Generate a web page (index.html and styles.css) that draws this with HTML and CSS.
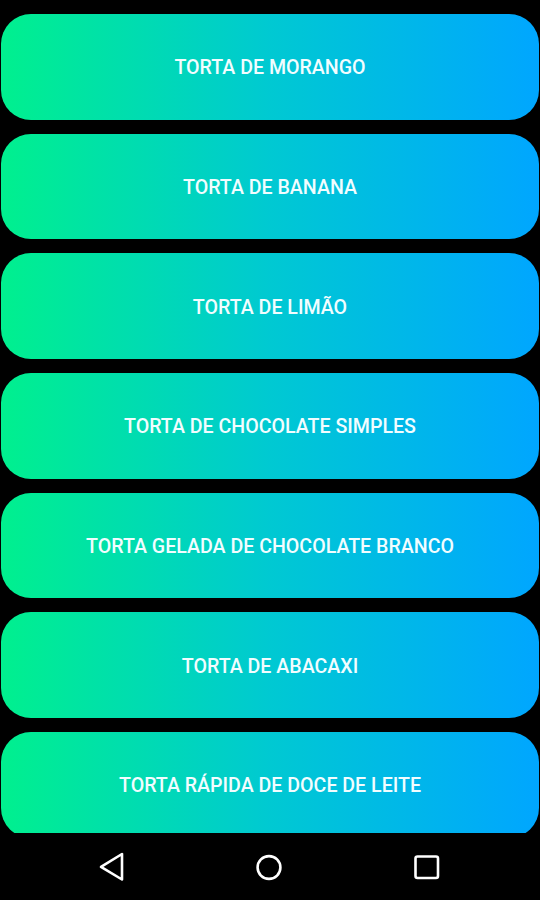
FILE: index.html
```html
<!DOCTYPE html>
<html lang="pt-BR">
<head>
    <meta charset="UTF-8">
    <title>Tortas</title>
    <link rel="stylesheet" href="styles.css">
</head>
<body>
    <div class="screen">
        <div class="recipe-list">
            <button class="recipe-btn">Torta de Morango</button>
            <button class="recipe-btn">Torta de Banana</button>
            <button class="recipe-btn">Torta de Limão</button>
            <button class="recipe-btn">Torta de Chocolate Simples</button>
            <button class="recipe-btn">Torta Gelada de Chocolate Branco</button>
            <button class="recipe-btn">Torta de Abacaxi</button>
            <button class="recipe-btn">Torta Rápida de Doce de Leite</button>
        </div>

        <!-- barra de navegação do android -->
        <div class="nav-bar">
            <svg class="nav-icon" width="30" height="30" viewBox="0 0 30 30">
                <path d="M25 2 L25 27.5 L4 14.8 Z" fill="none" stroke="#fff" stroke-width="2.6" stroke-linejoin="round"/>
            </svg>
            <svg class="nav-icon" width="30" height="30" viewBox="0 0 30 30">
                <circle cx="15" cy="15.5" r="11.4" fill="none" stroke="#fff" stroke-width="2.6"/>
            </svg>
            <svg class="nav-icon" width="30" height="30" viewBox="0 0 30 30">
                <rect x="4.5" y="4.5" width="22.5" height="21.5" rx="2" fill="none" stroke="#fff" stroke-width="2.6"/>
            </svg>
        </div>
    </div>
</body>
</html>
```

FILE: styles.css
```css
body {
    margin: 0;
    background: #000;
    font-family: Roboto, "Noto Sans", sans-serif;
}
.screen {
    height: 900px;
    display: flex;
    flex-direction: column;
    overflow: hidden;
}
.recipe-list {
    flex: 1;
    overflow: hidden;
    display: flex;
    flex-direction: column;
    gap: 14px;
    padding: 14px 1px 0;
}
.recipe-btn {
    flex: none;
    height: 105.67px;
    width: 100%;
    border: none;
    border-radius: 30px;
    background: linear-gradient(to right, #00f08e, #00c9d2 50%, #00a6ff);
    color: #f2fdff;
    font-family: Roboto, "Noto Sans", sans-serif;
    font-size: 19.6px;
    font-weight: 500;
    text-transform: uppercase;
    padding: 2px 0 0;
    cursor: pointer;
}
.nav-bar {
    flex: none;
    height: 67px;
    background: #000;
    display: flex;
    align-items: center;
    gap: 127px;
    padding: 0 0 0 97px;
}
.nav-icon {
    display: block;
}
```
